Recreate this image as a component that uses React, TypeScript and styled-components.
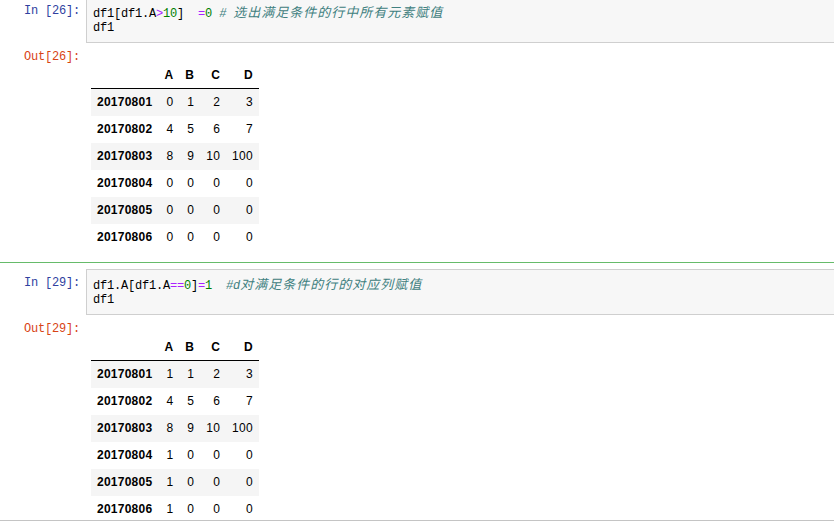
import React from "react";
import styled, { createGlobalStyle } from "styled-components";

const GlobalStyle = createGlobalStyle`
  html, body { margin: 0; padding: 0; background: #fff; overflow: hidden; }
  body { width: 834px; height: 522px; }
`;

const Notebook = styled.div`
  display: flex;
  flex-direction: column;
  margin-top: -3px;
  width: 834px;
`;

const Cell = styled.div<{ $first?: boolean }>`
  display: flex;
  flex-direction: column;
  padding-top: ${(p) => (p.$first ? "0" : "6px")};
  padding-bottom: ${(p) => (p.$first ? "11px" : "0")};
  border-bottom: ${(p) => (p.$first ? "1px solid #66bb6a" : "none")};
`;

const WindowEdge = styled.div`
  position: fixed;
  left: 0;
  right: 0;
  bottom: 1px;
  height: 1px;
  background: #c4c4c4;
`;

const Row = styled.div<{ $out?: boolean }>`
  display: flex;
  align-items: flex-start;
  margin-top: ${(p) => (p.$out ? "5px" : "0")};
`;

const Prompt = styled.div<{ $out?: boolean }>`
  flex: 0 0 86px;
  box-sizing: border-box;
  padding-right: 6px;
  padding-top: ${(p) => (p.$out ? "1px" : "6px")};
  text-align: right;
  font-family: "Liberation Mono", monospace;
  font-size: 12px;
  letter-spacing: -0.2px;
  line-height: 17px;
  color: ${(p) => (p.$out ? "#d84315" : "#303f9f")};
  white-space: pre;
`;

const InputArea = styled.div`
  flex: 1;
  box-sizing: border-box;
  background: #f7f7f7;
  border: 1px solid #cfcfcf;
  border-right: none;
  padding: 5px 6px;
`;

const CodeLine = styled.div`
  font-family: "Liberation Mono", monospace;
  font-size: 12px;
  letter-spacing: -0.2px;
  line-height: 17px;
  height: 17px;
  color: #000;
  white-space: pre;
`;

const Op = styled.span`
  color: #aa22ff;
`;

const Num = styled.span`
  color: #008000;
`;

const Comment = styled.span`
  color: #408080;
  font-style: italic;
`;

const Cjk = styled.span`
  font-family: "Noto Sans CJK SC", sans-serif;
  font-size: 13px;
  letter-spacing: 1px;
  font-style: italic;
`;

const OutputArea = styled.div`
  flex: 1;
  padding-left: 5px;
  padding-top: 14px;
`;

const Table = styled.table`
  border-collapse: collapse;
  border-spacing: 0;
  font-family: "Liberation Sans", Arial, sans-serif;
  font-size: 12px;
  letter-spacing: 0.25px;
  color: #000;
`;

const HeadCell = styled.th`
  text-align: right;
  font-weight: bold;
  padding: 0 6px;
  line-height: 26px;
  border-bottom: 1px solid #000;
`;

const BodyRow = styled.tr<{ $striped: boolean }>`
  background: ${(p) => (p.$striped ? "#f5f5f5" : "transparent")};
`;

const IndexCell = styled.th`
  text-align: right;
  font-weight: bold;
  padding: 0 6px;
  line-height: 27px;
`;

const ValueCell = styled.td`
  text-align: right;
  padding: 0 6px;
  line-height: 27px;
`;

type Frame = { index: string; values: number[] }[];

const DataFrame: React.FC<{ rows: Frame }> = ({ rows }) => (
  <Table>
    <thead>
      <tr>
        <HeadCell />
        {["A", "B", "C", "D"].map((c) => (
          <HeadCell key={c}>{c}</HeadCell>
        ))}
      </tr>
    </thead>
    <tbody>
      {rows.map((r, i) => (
        <BodyRow key={r.index} $striped={i % 2 === 0}>
          <IndexCell>{r.index}</IndexCell>
          {r.values.map((v, j) => (
            <ValueCell key={j}>{v}</ValueCell>
          ))}
        </BodyRow>
      ))}
    </tbody>
  </Table>
);

const frame1: Frame = [
  { index: "20170801", values: [0, 1, 2, 3] },
  { index: "20170802", values: [4, 5, 6, 7] },
  { index: "20170803", values: [8, 9, 10, 100] },
  { index: "20170804", values: [0, 0, 0, 0] },
  { index: "20170805", values: [0, 0, 0, 0] },
  { index: "20170806", values: [0, 0, 0, 0] },
];

const frame2: Frame = [
  { index: "20170801", values: [1, 1, 2, 3] },
  { index: "20170802", values: [4, 5, 6, 7] },
  { index: "20170803", values: [8, 9, 10, 100] },
  { index: "20170804", values: [1, 0, 0, 0] },
  { index: "20170805", values: [1, 0, 0, 0] },
  { index: "20170806", values: [1, 0, 0, 0] },
];

export default function App() {
  return (
    <>
      <GlobalStyle />
      <Notebook>
        <Cell $first>
          <Row>
            <Prompt>In [26]:</Prompt>
            <InputArea>
              <CodeLine>
                df1[df1.A<Op>&gt;</Op>
                <Num>10</Num>]{"  "}
                <Op>=</Op>
                <Num>0</Num>{" "}
                <Comment>
                  {"# "}
                  <Cjk>选出满足条件的行中所有元素赋值</Cjk>
                </Comment>
              </CodeLine>
              <CodeLine>df1</CodeLine>
            </InputArea>
          </Row>
          <Row $out>
            <Prompt $out>Out[26]:</Prompt>
            <OutputArea>
              <DataFrame rows={frame1} />
            </OutputArea>
          </Row>
        </Cell>
        <Cell>
          <Row>
            <Prompt>In [29]:</Prompt>
            <InputArea>
              <CodeLine>
                df1.A[df1.A<Op>==</Op>
                <Num>0</Num>]<Op>=</Op>
                <Num>1</Num>
                {"  "}
                <Comment>
                  {"#d"}
                  <Cjk>对满足条件的行的对应列赋值</Cjk>
                </Comment>
              </CodeLine>
              <CodeLine>df1</CodeLine>
            </InputArea>
          </Row>
          <Row $out>
            <Prompt $out>Out[29]:</Prompt>
            <OutputArea>
              <DataFrame rows={frame2} />
            </OutputArea>
          </Row>
        </Cell>
      </Notebook>
      <WindowEdge />
    </>
  );
}
